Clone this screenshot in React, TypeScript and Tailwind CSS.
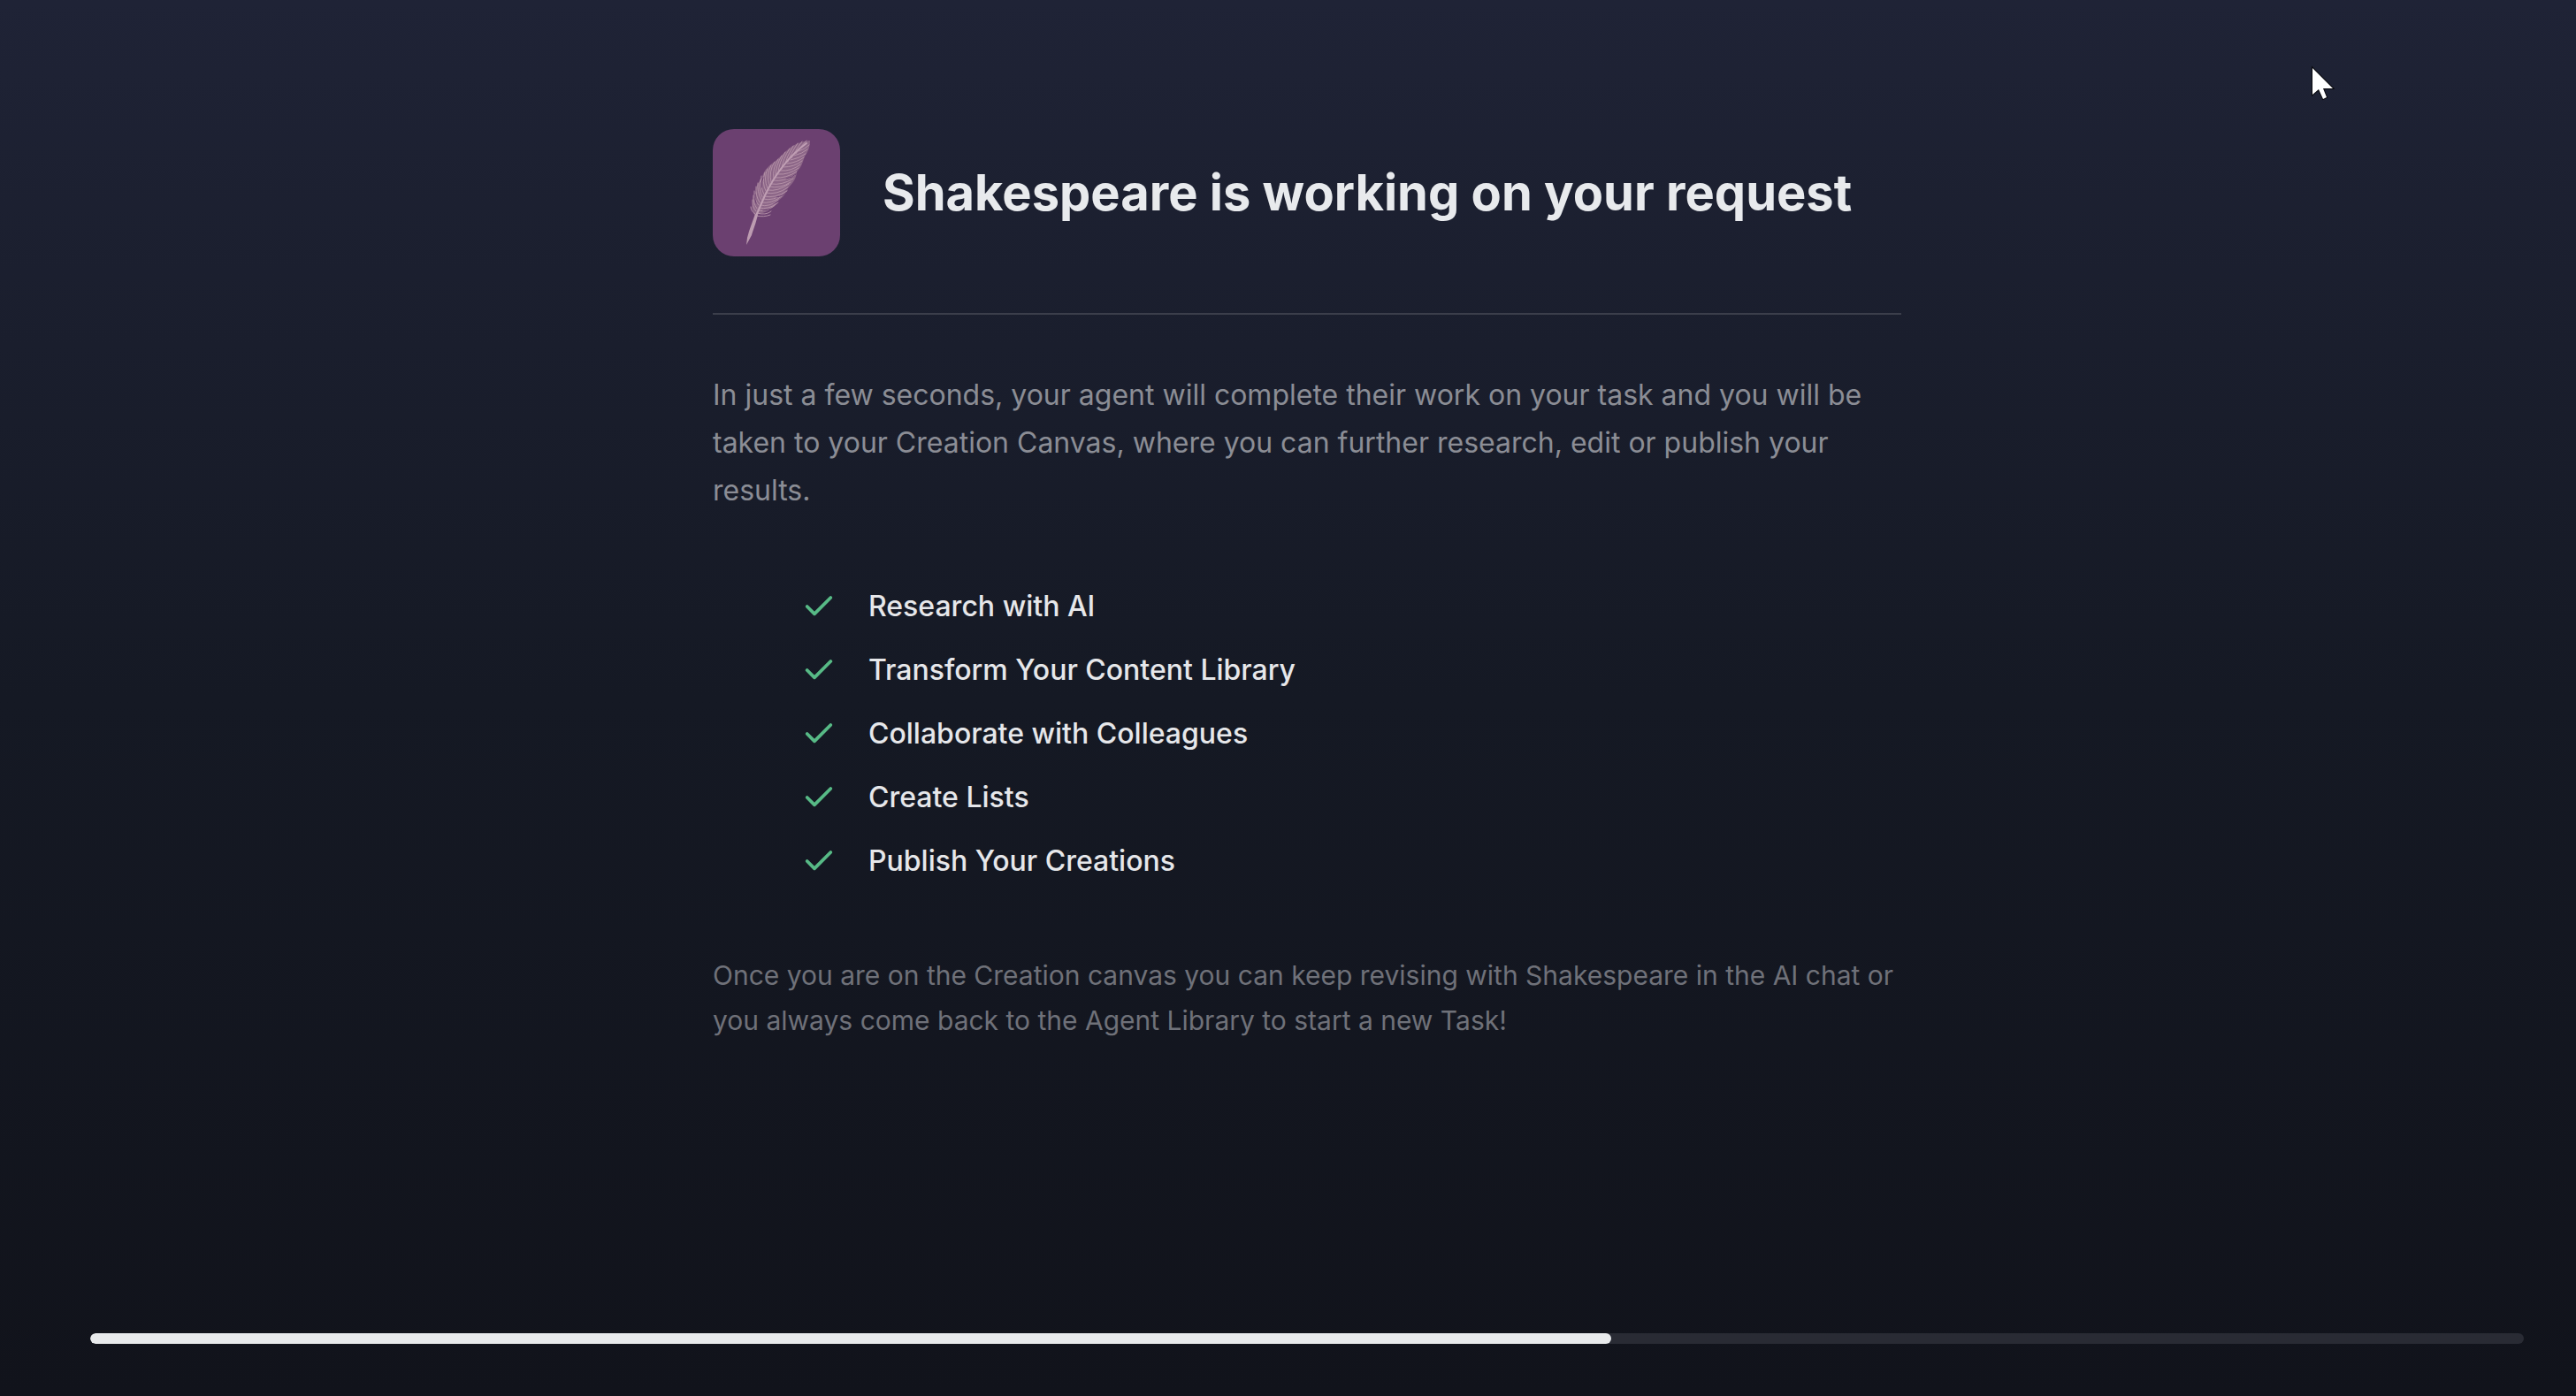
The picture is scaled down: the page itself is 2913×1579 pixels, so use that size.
import { Check } from "lucide-react";

const features = [
  "Research with AI",
  "Transform Your Content Library",
  "Collaborate with Colleagues",
  "Create Lists",
  "Publish Your Creations",
];

// Each barb is drawn from the quill to the edge of the vane
const leftBarbs = [
  "M48 96Q43 93 43 88", "M49 93Q44 87 45 80", "M50 90Q45 83 46 75", "M52 86Q46 79 47 70",
  "M53 83Q48 75 49 65", "M55 80Q50 71 51 61", "M56 77Q51 67 54 57", "M58 74Q53 64 55 53",
  "M60 70Q55 60 59 49", "M62 67Q57 56 62 45", "M64 63Q60 52 66 41", "M66 60Q63 48 70 37",
  "M69 56Q67 45 74 34", "M71 53Q71 42 78 30", "M74 49Q75 38 82 26", "M78 45Q79 34 87 22",
  "M81 41Q84 31 91 19", "M85 37Q88 28 96 16", "M89 33Q93 25 101 14", "M94 28Q98 21 106 13",
];

const rightBarbs = [
  "M49 98Q58 100 65 97", "M50 95Q60 98 66 93", "M51 92Q62 95 72 84", "M52 89Q63 92 74 83",
  "M54 86Q64 89 74 80", "M55 83Q66 85 78 76", "M57 79Q68 82 81 73", "M58 76Q70 79 84 70",
  "M60 72Q72 75 85 66", "M62 69Q74 71 86 62", "M64 65Q76 68 88 60", "M66 62Q78 64 91 56",
  "M68 58Q81 60 93 52", "M71 55Q83 56 95 48", "M74 51Q86 52 97 44", "M77 47Q89 48 99 40",
  "M80 43Q92 43 101 36", "M84 39Q95 38 103 32", "M88 35Q98 33 105 28", "M92 30Q101 28 107 23",
  "M97 25Q104 23 109 18",
];

function QuillBadge() {
  return (
    <svg viewBox="0 0 144 144" className="size-36 shrink-0 rounded-3xl bg-[#6b4070]" aria-hidden="true">
      <path
        d="M110 13C103 13 91 17 84 24C80 27 76 32 71 36C64 41 58 46 56 54C53 60 49 62 49 70C45 76 46 80 45 84C43 90 46 95 48 98L52 96C56 96 68 91 73 84C70 84 68 85 65 85C74 82 81 77 85 68L81 70C89 64 95 56 95 48C101 43 102 36 104 31C108 25 110 20 110 13Z"
        fill="#96708f"
        fillOpacity="0.8"
      />
      <g fill="none" stroke="#b895aa" strokeWidth="0.9" strokeLinecap="round">
        {[...leftBarbs, ...rightBarbs].map((d) => (
          <path key={d} d={d} />
        ))}
      </g>
      <g fill="none" stroke="#6b4070" strokeWidth="1" strokeLinecap="round">
        <path d="M55 66Q54 60 57 55" />
        <path d="M49 84Q47 79 48 74" />
        <path d="M83 56Q90 55 94 51" />
        <path d="M72 77Q79 76 84 71" />
        <path d="M57 92Q68 91 73 86" />
      </g>
      <path d="M106 16C87 30 71 50 59 75L49 98" fill="none" stroke="#c09fb4" strokeWidth="2" strokeLinecap="round" />
      <path d="M48 96L51 97C49 106 45 116 44 120L38 131L39 123C41 114 45 105 48 96Z" fill="#bd9cb1" />
    </svg>
  );
}

function Pointer() {
  return (
    <svg viewBox="0 0 28 42" className="pointer-events-none absolute top-[74px] right-[273px] h-[42px] w-7" aria-hidden="true">
      <path d="M3 3V33L10 27L15 38L19 36L15 26H26Z" fill="#fff" stroke="#08080c" strokeWidth="2" paintOrder="stroke" />
    </svg>
  );
}

export default function App() {
  const progress = 62.5;

  return (
    <main className="relative flex min-h-screen flex-col bg-linear-to-b from-[#1f2336] via-[#151924] to-[#11131b] pr-[59px] pb-[59px] pl-[102px] font-['Inter',sans-serif]">
      <div className="mx-auto w-full max-w-[1344px] flex-1 pt-[146px]">
        {/* Header */}
        <header className="flex items-center gap-12 border-b-2 border-[#3b3e4b] pb-16">
          <QuillBadge />
          <h1 className="text-[56px] leading-[68px] font-bold text-[#e8eaed]">
            Shakespeare is working on your request
          </h1>
        </header>

        <p className="mt-16 text-[32px] leading-[54px] text-[#8b8d95]">
          In just a few seconds, your agent will complete their work on your task and you will be
          taken to your Creation Canvas, where you can further research, edit or publish your
          results.
        </p>

        {/* Features */}
        <ul className="mt-19 flex flex-col gap-4 pl-[100px]">
          {features.map((feature) => (
            <li key={feature} className="flex items-center gap-9">
              <Check strokeWidth={2.25} className="size-10 shrink-0 text-[#57ba86]" />
              <span className="text-[32px] leading-[56px] font-medium text-[#e6e7ea]">{feature}</span>
            </li>
          ))}
        </ul>

        <p className="mt-19 text-[30px] leading-[51px] text-[#6f7179]">
          Once you are on the Creation canvas you can keep revising with Shakespeare in the AI chat or
          you always come back to the Agent Library to start a new Task!
        </p>
      </div>

      {/* Progress */}
      <div
        role="progressbar"
        aria-label="Task progress"
        aria-valuenow={progress}
        aria-valuemin={0}
        aria-valuemax={100}
        className="h-3 w-full overflow-hidden rounded-full bg-[#292b34]"
      >
        <div className="h-full rounded-full bg-[#e8eaec]" style={{ width: `${progress}%` }} />
      </div>

      <Pointer />
    </main>
  );
}
